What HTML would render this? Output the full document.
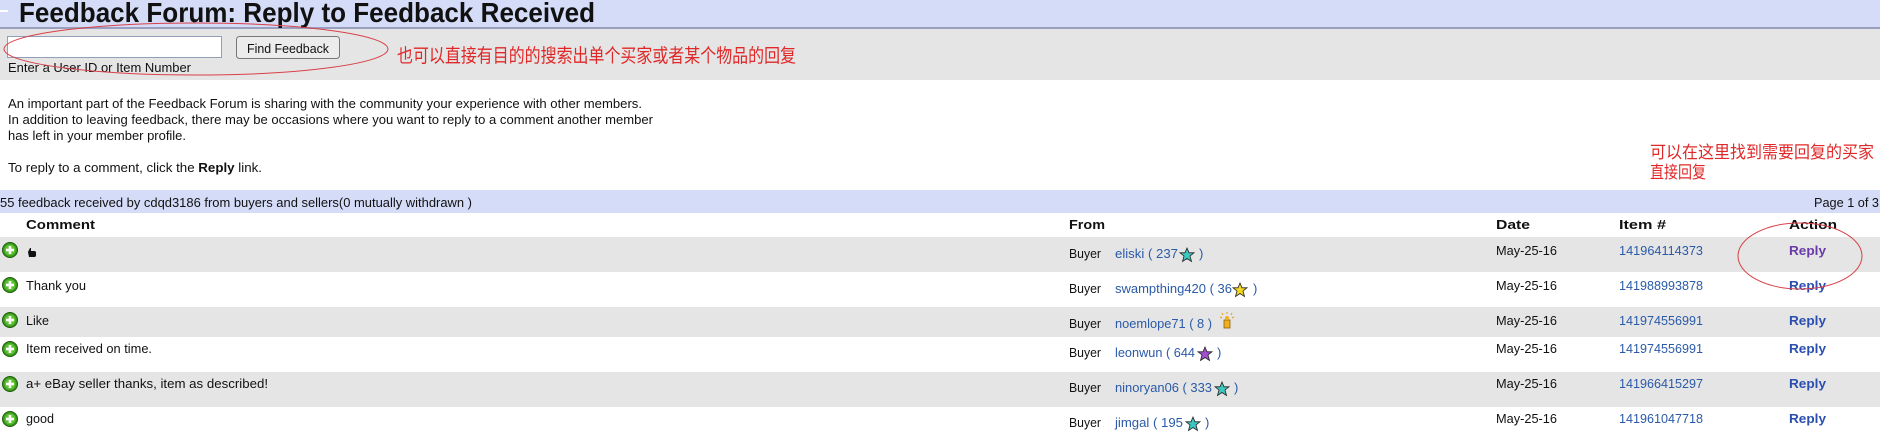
<!DOCTYPE html>
<html><head><meta charset="utf-8"><style>
html,body{margin:0;padding:0;background:#fff;width:1886px;height:440px;overflow:hidden}
svg{display:block}
text{font-family:"Liberation Sans",Arial,sans-serif;font-size:13px;fill:#111}
.cjk{font-family:"Liberation Sans","Noto Sans CJK SC",sans-serif;fill:#e02828}
.b{font-weight:bold}
.l{fill:#2a5aa8}
.r{fill:#2a4fb0;font-weight:bold}
</style></head><body>
<svg width="1886" height="440" viewBox="0 0 1886 440" xmlns="http://www.w3.org/2000/svg">
<defs>
<g id="plus"><circle r="7.5" fill="#3a9a1a" stroke="#1f5e0e" stroke-width="1"/><circle r="5.5" fill="#5cc232"/><rect x="-4" y="-1.3" width="8" height="2.6" fill="#fff"/><rect x="-1.3" y="-4" width="2.6" height="8" fill="#fff"/></g>
<polygon id="star" points="0,-7 2,-2.2 7,-2.2 3,1 4.5,6.5 0,3.5 -4.5,6.5 -3,1 -7,-2.2 -2,-2.2" stroke="#222" stroke-width="0.8"/>
</defs>
<rect x="0" y="0" width="1880" height="27" fill="#d5dcf8"/>
<rect x="0" y="27" width="1880" height="2" fill="#9a9fbf"/>
<rect x="0" y="10" width="8" height="2" fill="#fff"/>
<text x="19" y="22" class="b" style="font-size:28px" textLength="576" lengthAdjust="spacingAndGlyphs">Feedback Forum: Reply to Feedback Received</text>
<rect x="0" y="29" width="1880" height="51" fill="#e5e5e5"/>
<rect x="7.5" y="36.5" width="214" height="21" fill="#fff" stroke="#8fa0b8"/>
<rect x="236.5" y="36.5" width="103" height="22" rx="3" fill="#ececec" stroke="#777"/>
<text x="247" y="53" textLength="82" lengthAdjust="spacingAndGlyphs">Find Feedback</text>
<text x="8" y="72" textLength="183" lengthAdjust="spacingAndGlyphs">Enter a User ID or Item Number</text>
<ellipse cx="196" cy="49" rx="192" ry="26" fill="none" stroke="#d84048" stroke-width="1"/>
<text x="397" y="62" class="cjk" style="font-size:19px" textLength="399" lengthAdjust="spacingAndGlyphs">也可以直接有目的的搜索出单个买家或者某个物品的回复</text>
<text x="8" y="108" textLength="634" lengthAdjust="spacingAndGlyphs">An important part of the Feedback Forum is sharing with the community your experience with other members.</text>
<text x="8" y="124" textLength="645" lengthAdjust="spacingAndGlyphs">In addition to leaving feedback, there may be occasions where you want to reply to a comment another member</text>
<text x="8" y="140" textLength="178" lengthAdjust="spacingAndGlyphs">has left in your member profile.</text>
<text x="8" y="172" textLength="254" lengthAdjust="spacingAndGlyphs">To reply to a comment, click the <tspan class="b">Reply</tspan> link.</text>
<text x="1650" y="158" class="cjk" style="font-size:17px" textLength="224" lengthAdjust="spacingAndGlyphs">可以在这里找到需要回复的买家</text>
<text x="1650" y="178" class="cjk" style="font-size:17px" textLength="56" lengthAdjust="spacingAndGlyphs">直接回复</text>
<rect x="0" y="190" width="1880" height="23" fill="#d5dcf8"/>
<text x="0" y="207" textLength="472" lengthAdjust="spacingAndGlyphs">55 feedback received by cdqd3186 from buyers and sellers(0 mutually withdrawn )</text>
<text x="1814" y="207" textLength="65" lengthAdjust="spacingAndGlyphs">Page 1 of 3</text>
<text x="26" y="229" class="b" textLength="69" lengthAdjust="spacingAndGlyphs">Comment</text>
<text x="1069" y="229" class="b" textLength="36" lengthAdjust="spacingAndGlyphs">From</text>
<text x="1496" y="229" class="b" textLength="34" lengthAdjust="spacingAndGlyphs">Date</text>
<text x="1619" y="229" class="b" textLength="47" lengthAdjust="spacingAndGlyphs">Item #</text>
<text x="1789" y="229" class="b" textLength="48" lengthAdjust="spacingAndGlyphs">Action</text>
<rect x="0" y="237" width="1880" height="35" fill="#e5e5e5"/>
<rect x="0" y="307" width="1880" height="30" fill="#e5e5e5"/>
<rect x="0" y="372" width="1880" height="35" fill="#e5e5e5"/>
<use href="#plus" x="10" y="250"/>
<path d="M28 252 l2-4 1 0 0 3 4 0 1 1 0 4 -1 1 -6 0z" fill="#111"/>
<text x="1069" y="258" textLength="32" lengthAdjust="spacingAndGlyphs">Buyer</text>
<text x="1115" y="258" class="l" textLength="63" lengthAdjust="spacingAndGlyphs">eliski ( 237</text>
<use href="#star" x="1187" y="255" fill="#3cc8c0"/>
<text x="1199" y="258" class="l">)</text>
<text x="1496" y="255" textLength="61" lengthAdjust="spacingAndGlyphs">May-25-16</text>
<text x="1619" y="255" class="l" textLength="84" lengthAdjust="spacingAndGlyphs">141964114373</text>
<text x="1789" y="255" class="r" style="fill:#6a3aaa" textLength="37" lengthAdjust="spacingAndGlyphs">Reply</text>
<use href="#plus" x="10" y="285"/>
<text x="26" y="290" textLength="60" lengthAdjust="spacingAndGlyphs">Thank you</text>
<text x="1069" y="293" textLength="32" lengthAdjust="spacingAndGlyphs">Buyer</text>
<text x="1115" y="293" class="l" textLength="117" lengthAdjust="spacingAndGlyphs">swampthing420 ( 36</text>
<use href="#star" x="1240" y="290" fill="#f4d820"/>
<text x="1253" y="293" class="l">)</text>
<text x="1496" y="290" textLength="61" lengthAdjust="spacingAndGlyphs">May-25-16</text>
<text x="1619" y="290" class="l" textLength="84" lengthAdjust="spacingAndGlyphs">141988993878</text>
<text x="1789" y="290" class="r" textLength="37" lengthAdjust="spacingAndGlyphs">Reply</text>
<use href="#plus" x="10" y="320"/>
<text x="26" y="325" textLength="23" lengthAdjust="spacingAndGlyphs">Like</text>
<text x="1069" y="328" textLength="32" lengthAdjust="spacingAndGlyphs">Buyer</text>
<text x="1115" y="328" class="l" textLength="97" lengthAdjust="spacingAndGlyphs">noemlope71 ( 8 )</text>
<g transform="translate(1227,323)"><rect x="-3" y="-3" width="6" height="8" fill="#f0b020" stroke="#8a6010" stroke-width="0.8"/><circle cy="-5" r="2" fill="#f0b020"/><path d="M-7 -6l2 1M7 -6l-2 1M0 -11v2M-5 -10l1 2M5 -10l-1 2" stroke="#e0a020"/></g>
<text x="1496" y="325" textLength="61" lengthAdjust="spacingAndGlyphs">May-25-16</text>
<text x="1619" y="325" class="l" textLength="84" lengthAdjust="spacingAndGlyphs">141974556991</text>
<text x="1789" y="325" class="r" textLength="37" lengthAdjust="spacingAndGlyphs">Reply</text>
<use href="#plus" x="10" y="349"/>
<text x="26" y="353" textLength="126" lengthAdjust="spacingAndGlyphs">Item received on time.</text>
<text x="1069" y="357" textLength="32" lengthAdjust="spacingAndGlyphs">Buyer</text>
<text x="1115" y="357" class="l" textLength="80" lengthAdjust="spacingAndGlyphs">leonwun ( 644</text>
<use href="#star" x="1205" y="354" fill="#a050d0"/>
<text x="1217" y="357" class="l">)</text>
<text x="1496" y="353" textLength="61" lengthAdjust="spacingAndGlyphs">May-25-16</text>
<text x="1619" y="353" class="l" textLength="84" lengthAdjust="spacingAndGlyphs">141974556991</text>
<text x="1789" y="353" class="r" textLength="37" lengthAdjust="spacingAndGlyphs">Reply</text>
<use href="#plus" x="10" y="384"/>
<text x="26" y="388" textLength="242" lengthAdjust="spacingAndGlyphs">a+ eBay seller thanks, item as described!</text>
<text x="1069" y="392" textLength="32" lengthAdjust="spacingAndGlyphs">Buyer</text>
<text x="1115" y="392" class="l" textLength="97" lengthAdjust="spacingAndGlyphs">ninoryan06 ( 333</text>
<use href="#star" x="1222" y="389" fill="#3cc8c0"/>
<text x="1234" y="392" class="l">)</text>
<text x="1496" y="388" textLength="61" lengthAdjust="spacingAndGlyphs">May-25-16</text>
<text x="1619" y="388" class="l" textLength="84" lengthAdjust="spacingAndGlyphs">141966415297</text>
<text x="1789" y="388" class="r" textLength="37" lengthAdjust="spacingAndGlyphs">Reply</text>
<use href="#plus" x="10" y="419"/>
<text x="26" y="423" textLength="28" lengthAdjust="spacingAndGlyphs">good</text>
<text x="1069" y="427" textLength="32" lengthAdjust="spacingAndGlyphs">Buyer</text>
<text x="1115" y="427" class="l" textLength="68" lengthAdjust="spacingAndGlyphs">jimgal ( 195</text>
<use href="#star" x="1193" y="424" fill="#3cc8c0"/>
<text x="1205" y="427" class="l">)</text>
<text x="1496" y="423" textLength="61" lengthAdjust="spacingAndGlyphs">May-25-16</text>
<text x="1619" y="423" class="l" textLength="84" lengthAdjust="spacingAndGlyphs">141961047718</text>
<text x="1789" y="423" class="r" textLength="37" lengthAdjust="spacingAndGlyphs">Reply</text>
<ellipse cx="1800" cy="256" rx="62" ry="33" fill="none" stroke="#d84048" stroke-width="1"/>
</svg>
</body></html>
